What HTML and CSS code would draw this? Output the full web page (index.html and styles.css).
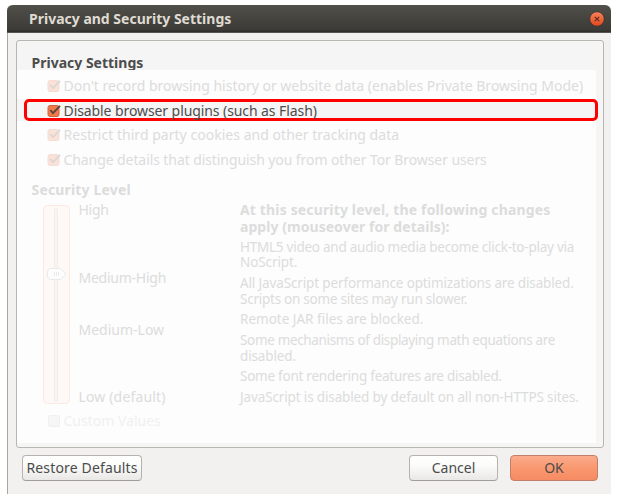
FILE: index.html
```
<!DOCTYPE html>
<html lang="en">
<head>
<meta charset="utf-8">
<title>Privacy and Security Settings</title>
<link rel="stylesheet" href="styles.css">
</head>
<body>
<div class="window">
  <header class="titlebar">
    <h1 class="title">Privacy and Security Settings</h1>
    <svg class="close" viewBox="0 0 16 16">
      <defs><linearGradient id="cg" x1="0" y1="0" x2="0" y2="1"><stop offset="0" stop-color="#f9825d"/><stop offset="1" stop-color="#df481c"/></linearGradient></defs>
      <circle cx="8" cy="8" r="7.3" fill="url(#cg)" stroke="#32312d" stroke-width=".8"/>
      <path d="M5.8 5.8l4.4 4.4M10.200 5.800l-4.400 4.400" stroke="#5d2f1f" stroke-width="1.200"/>
    </svg>
  </header>
  <main class="panel">
    <h2 class="heading">Privacy Settings</h2>
    <div class="sheet">
      <label class="row row-first">
        <svg class="check faded" viewBox="0 0 14 14"><use href="#checked"/></svg><span>Don't record browsing history or website data (enables Private Browsing Mode)</span>
      </label>
      <div class="active-row">
        <label class="row highlight">
          <svg class="check" viewBox="0 0 14 14">
            <g id="checked"><rect x="1" y="1.500" width="11" height="11" rx="2" fill="#f0794c" stroke="#d0643b"/><path d="M3.300 6L6 9.200L13 1.800" fill="none" stroke="#5a4238" stroke-width="1.800"/></g>
          </svg><span class="tight-1">Disable browser plugins (such as Flash)</span>
        </label>
      </div>
      <label class="row row-third">
        <svg class="check faded" viewBox="0 0 14 14"><use href="#checked"/></svg><span class="wide-0">Restrict third party cookies and other tracking data</span>
      </label>
      <label class="row row-fourth">
        <svg class="check faded" viewBox="0 0 14 14"><use href="#checked"/></svg><span class="tight-1">Change details that distinguish you from other Tor Browser users</span>
      </label>
      <h2 class="level-heading">Security Level</h2>
      <section class="levels">
        <svg class="slider" viewBox="0 0 27 200">
          <rect x=".5" y=".5" width="26" height="198" rx="4" fill="#fef9f7" stroke="#fce9e2"/>
          <rect x="11.500" y="3.500" width="3" height="193" rx="1.500" fill="#f8f4f2" stroke="#f1edeb"/>
          <path d="M8 63.500h9.500L23 69l-5.500 5.500H8c-5 0-5-11 0-11z" fill="#fdfdfd" stroke="#e9e9e9"/>
          <path d="M11.500 67v4M13.500 67v4M15.500 67v4" stroke="#ebebeb"/>
        </svg>
        <ul class="names">
          <li class="tight-3">High</li>
          <li class="tight-3">Medium-High</li>
          <li>Medium-Low</li>
          <li class="wide-2">Low (default)</li>
        </ul>
        <div class="details">
          <h3><span class="wide-2">At this security level, the following changes</span><br><span class="wide-1">apply (mouseover for details):</span></h3>
          <p><span class="tight-3">HTML5 video and audio media become click-to-play via</span><br><span class="tight-1">NoScript.</span></p>
          <p><span class="tight-2">All JavaScript performance optimizations are disabled.</span><br><span class="tight-3">Scripts on some sites may run slower.</span></p>
          <p>Remote JAR files are blocked.</p>
          <p><span class="tight-4">Some mechanisms of displaying math equations are</span><br><span class="tight-2">disabled.</span></p>
          <p class="tight-3">Some font rendering features are disabled.</p>
          <p class="tight-2">JavaScript is disabled by default on all non-HTTPS sites.</p>
        </div>
      </section>
      <label class="row custom"><i class="empty-box"></i><span>Custom Values</span></label>
    </div>
  </main>
  <footer class="actions">
    <button class="restore wide-2">Restore Defaults</button>
    <button class="cancel">Cancel</button>
    <button class="ok">OK</button>
  </footer>
</div>
</body>
</html>
```
FILE: styles.css
```
* { box-sizing: border-box; }
body { margin: 0; background: #fff; font: 14px/16px "Noto Sans", sans-serif; }
h1, h2, h3, p, ul { margin: 0; padding: 0; font-size: 14px; line-height: 16px; }
ul { list-style: none; }

.window { width: 604px; height: 489px; margin: 5px 0 0 7px; display: flex; flex-direction: column; background: #f2f1f0; border-left: 1px solid #aaa69f; border-radius: 5px 5px 0 0; }
.titlebar { height: 28px; flex: none; margin-left: -1px; display: flex; align-items: center; justify-content: space-between; padding: 0 6px 0 22px; border-radius: 6px 6px 0 0; background: linear-gradient(#504f49, #3c3b37 88%, #2f2e2b 96%, #77756f); }
.title { color: #dfdbd2; }
.close { width: 16px; height: 16px; }

.panel { height: 408px; flex: none; margin: 7px 7px 0 8px; border: 1px solid #b9b6b2; border-radius: 3px; background: #f5f5f5; display: flex; flex-direction: column; }
.heading { height: 29px; padding: 14px 0 0 14.5px; color: #4c4c4c; }
.sheet { width: 579px; height: 373px; background: #fdfdfd; color: #dcdcdc; display: flex; flex-direction: column; }

.row { display: flex; align-items: center; height: 24px; padding-left: 29.5px; white-space: nowrap; flex: none; }
.row span { margin-left: 3px; }
.check { width: 14px; height: 14px; flex: none; }
.faded { opacity: .2; }
.row-first { height: 29px; padding-top: 2px; }
.active-row { background: #f5f5f5; margin-right: -2px; padding-left: 7px; flex: none; }
.highlight { height: 22px; padding: 1px 0 0 19.5px; border: 3px solid #f00; border-radius: 5px; color: #4c4c4c; }
.row-third { height: 27px; }
.row-fourth { height: 22px; padding-top: 1px; }
.level-heading { margin: 12px 0 0 14.5px; letter-spacing: .17px; }
.levels { display: grid; grid-template-columns: 27px 161px 1fr; margin: 4px 0 0 26px; height: 205px; flex: none; }
.slider { width: 27px; height: 200px; margin-top: 3px; }
.names { padding-left: 8.5px; }
.names li { height: 16px; }
.names li:nth-child(2) { margin-top: 52px; }
.names li:nth-child(3) { margin-top: 36px; }
.names li:nth-child(4) { margin-top: 51px; }
.details { padding-left: 9px; white-space: nowrap; }
.details h3 { line-height: 16.5px; }
.details p { font-size: 13.5px; line-height: 15.8px; margin-top: 4.7px; }
.custom { color: #f0f0f0; height: 28px; }
.empty-box { width: 12px; height: 12px; margin: 0 1px; border: 1px solid #f1f1f1; border-radius: 2px; background: #f6f6f6; }

.actions { display: flex; margin: 7px 13px 0 14px; }
button { height: 26px; padding: 0; border: 1px solid #b6b2ad; border-bottom-color: #a19e99; border-radius: 4px; background: linear-gradient(#fff, #fbfbfa 40%, #e9e8e6); color: #4c4c4c; font: 14px/20px "Noto Sans", sans-serif; }
.restore { width: 120px; }
.cancel { width: 89px; margin-left: auto; }
.ok { width: 88px; margin-left: 12px; background: linear-gradient(#fbab8b, #f99870 50%, #f68b62); border-color: #c18068; }

.wide-0 { letter-spacing: .03px; }
.wide-1 { letter-spacing: .05px; }
.wide-2 { letter-spacing: .15px; }
.tight-1 { letter-spacing: -.085px; }
.tight-2 { letter-spacing: -.14px; }
.tight-3 { letter-spacing: -.25px; }
.tight-4 { letter-spacing: -.34px; }
```
